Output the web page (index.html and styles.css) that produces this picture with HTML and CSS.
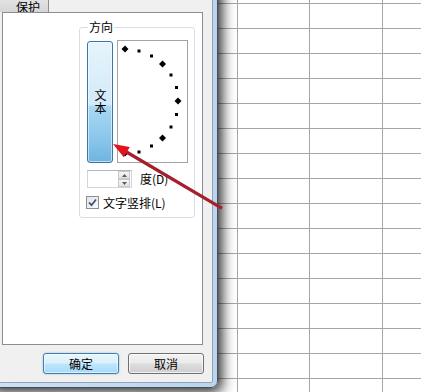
FILE: index.html
```html
<!DOCTYPE html>
<html lang="zh-CN">
<head>
<meta charset="utf-8">
<title>设置单元格格式</title>
<link rel="stylesheet" href="styles.css">
</head>
<body>
<div class="screen">
  <div class="dialog">
    <div class="dialog-body">
      <div class="tabs"><div class="tab">保护</div></div>
      <div class="panel">
        <fieldset class="group">
          <legend>方向</legend>
          <div class="orient-row">
            <div class="text-btn"><span class="vtext">文本</span></div>
            <div class="dial">
              <svg width="69" height="121" viewBox="0 0 69 121">
                <g fill="#000">
                  <polygon points="7,4.5 10.5,8 7,11.5 3.5,8"/>
                  <rect x="19.5" y="8.5" width="3" height="3"/>
                  <rect x="32" y="13.5" width="3" height="3"/>
                  <polygon points="44.5,19.5 48,23 44.5,26.5 41,23"/>
                  <rect x="51.5" y="32.5" width="3" height="3"/>
                  <rect x="57" y="45" width="3" height="3"/>
                  <polygon points="60,56.5 63.5,60 60,63.5 56.5,60"/>
                  <rect x="57" y="72" width="3" height="3"/>
                  <rect x="51.5" y="84.5" width="3" height="3"/>
                  <polygon points="44.5,93.5 48,97 44.5,100.5 41,97"/>
                  <rect x="32" y="103.5" width="3" height="3"/>
                  <rect x="19.5" y="109.5" width="3" height="3"/>
                  <polygon points="7,108.5 10.5,112 7,115.5 3.5,112"/>
                </g>
              </svg>
            </div>
          </div>
          <div class="degree-row">
            <div class="spin">
              <span class="spin-field"></span>
              <span class="spin-btns">
                <span class="spin-btn"><svg width="5" height="3" viewBox="0 0 5 3"><polygon points="2.5,0 5,3 0,3" fill="#5b5b5b"/></svg></span>
                <span class="spin-btn"><svg width="5" height="3" viewBox="0 0 5 3"><polygon points="0,0 5,0 2.5,3" fill="#5b5b5b"/></svg></span>
              </span>
            </div>
            <span class="label">度(D)</span>
          </div>
          <div class="check-row">
            <span class="checkbox"><svg width="11" height="11" viewBox="0 0 11 11"><path d="M2 5.5 L4.5 8.2 L9 2.5" fill="none" stroke="#3d4f78" stroke-width="1.8"/></svg></span>
            <span class="label">文字竖排(L)</span>
          </div>
        </fieldset>
      </div>
      <div class="buttons">
        <button class="btn btn-default">确定</button>
        <button class="btn">取消</button>
      </div>
    </div>
  </div>
  <div class="sheet">
    <div class="col col-a"></div>
    <div class="col col-b"></div>
    <div class="col col-c"></div>
    <div class="col col-d"></div>
  </div>
  <svg class="arrow" width="421" height="392" viewBox="0 0 421 392">
    <line x1="124" y1="150.5" x2="222" y2="208.3" stroke="#a5202d" stroke-width="3.2"/>
    <polygon points="113,144 129.8,146.9 123.8,157.3" fill="#e3131d"/>
  </svg>
</div>
</body>
</html>
```

FILE: styles.css
```css
* { box-sizing: border-box; }

html, body {
  margin: 0;
  padding: 0;
  background: #fff;
}

body {
  font-family: "Noto Sans CJK SC", "Liberation Sans", sans-serif;
  font-size: 12px;
  color: #000;
}

.screen {
  position: relative;
  width: 421px;
  height: 392px;
  overflow: hidden;
  display: flex;
  align-items: flex-start;
  background-color: #fff;
  background-image: repeating-linear-gradient(to bottom, #a6a6a6 0, #a6a6a6 1px, transparent 1px, transparent 25px);
  background-position: 0 3px;
}

/* dialog frame */
.dialog {
  flex: none;
  width: 232px;
  height: 428px;
  margin: -40px 0 0 -14px;
  border: 1px solid #3e4f63;
  border-radius: 7px;
  padding: 4px;
  background: linear-gradient(to right, #cfe0f1, #bdd4ea);
  box-shadow: 4px 4px 13px rgba(0, 0, 0, 0.85);
}

.dialog-body {
  height: 100%;
  border: 1px solid #8ea4be;
  border-radius: 2px;
  background: #f0f0f0;
  padding: 24px 9px 8px 8px;
  display: flex;
  flex-direction: column;
}

.tabs {
  display: flex;
  height: 22px;
}

.tab {
  width: 50px;
  height: 22px;
  margin-left: -1px;
  padding: 10px 0 0 16px;
  border: 1px solid #898c95;
  border-bottom: none;
  background: linear-gradient(to bottom, #ececec, #d6d6d6);
  line-height: 12px;
  font-size: 12px;
}

.panel {
  margin-left: 2px;
  width: 201px;
  height: 333px;
  border: 1px solid #898c95;
  background: #fff;
  padding: 7px 0 0 76px;
}

/* group box */
.group {
  margin: 0;
  width: 116px;
  border: 1px solid #d5dfe5;
  border-radius: 3px;
  padding: 6px 6px 8px 7px;
  min-inline-size: 0;
  display: flex;
  flex-direction: column;
}

.group legend {
  margin-left: 1px;
  padding: 0 1px;
  font-size: 12px;
  line-height: 14px;
}

.orient-row {
  display: flex;
  gap: 4px;
  align-items: flex-start;
}

.text-btn {
  width: 26px;
  height: 122px;
  margin-top: 1px;
  border: 1px solid #3a77a8;
  border-radius: 3px;
  background: linear-gradient(to bottom, #e6f4fc 0%, #d2eaf9 52%, #a9d7f3 54%, #8ac7ec 80%, #6fb4e0 100%);
  box-shadow: inset 0 0 0 1px rgba(255, 255, 255, 0.55);
  display: flex;
  align-items: center;
  justify-content: center;
}

.vtext {
  writing-mode: vertical-rl;
  text-orientation: upright;
  font-size: 12px;
  line-height: 12px;
  letter-spacing: 1px;
}

.dial {
  width: 71px;
  height: 123px;
  border: 1px solid #a3a3a3;
  background: #fff;
}

.dial svg { display: block; }

.degree-row {
  display: flex;
  align-items: center;
  gap: 8px;
  margin-top: 7px;
  height: 18px;
}

.spin {
  width: 45px;
  height: 18px;
  border: 1px solid #d2d6dc;
  border-top-color: #b3b6bc;
  display: flex;
  justify-content: flex-end;
  padding: 0 1px 0 0;
  background: #fff;
}

.spin-btns {
  width: 12px;
  display: flex;
  flex-direction: column;
}

.spin-btn {
  flex: 1;
  border: 1px solid #c8c8c8;
  background: linear-gradient(to bottom, #f7f7f7, #e3e3e3);
  display: flex;
  align-items: center;
  justify-content: center;
}

.spin-btn svg { display: block; }

.label {
  font-size: 12px;
  line-height: 14px;
  white-space: nowrap;
}

.check-row {
  display: flex;
  align-items: center;
  gap: 4px;
  margin-top: 8px;
  margin-left: -1px;
  height: 13px;
}

.checkbox {
  width: 13px;
  height: 13px;
  border: 1px solid #8e8f8f;
  background: linear-gradient(135deg, #e4e4e4, #fafafa);
  display: flex;
  align-items: center;
  justify-content: center;
}

.checkbox svg { display: block; }

/* buttons */
.buttons {
  display: flex;
  justify-content: flex-end;
  gap: 9px;
  margin-top: 8px;
  margin-right: -1px;
}

.btn {
  width: 76px;
  height: 21px;
  padding: 0;
  border: 1px solid #707070;
  border-radius: 3px;
  background: linear-gradient(to bottom, #f2f2f2 0%, #ebebeb 48%, #dddddd 52%, #cfcfcf 100%);
  box-shadow: inset 0 0 0 1px rgba(255, 255, 255, 0.7);
  font-family: "Noto Sans CJK SC", sans-serif;
  font-size: 12px;
  line-height: 17px;
  color: #000;
}

.btn-default {
  border-color: #3c7fb1;
  background: linear-gradient(to bottom, #eaf6fd 0%, #d9f0fc 48%, #bee6fd 52%, #a7d9f5 100%);
  box-shadow: inset 0 0 0 1px rgba(255, 255, 255, 0.6), 0 0 2px rgba(60, 127, 177, 0.5);
}

/* spreadsheet */
.sheet {
  flex: 1;
  align-self: stretch;
  display: flex;
}

.col { height: 100%; }
.col-a { width: 19px; }
.col-b { width: 72px; border-left: 1px solid #a6a6a6; }
.col-c { width: 73px; border-left: 1px solid #a6a6a6; }
.col-d { flex: 1; border-left: 1px solid #a6a6a6; }

.arrow {
  position: absolute;
  left: 0;
  top: 0;
  pointer-events: none;
}
```
